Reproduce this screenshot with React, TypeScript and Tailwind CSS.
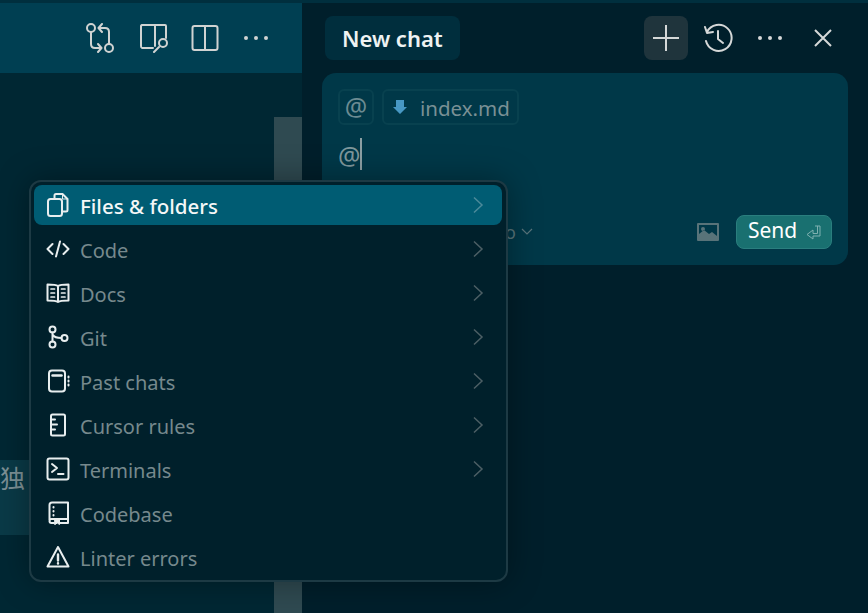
import { ReactNode } from "react";

const font = { fontFamily: '"Noto Sans", "Noto Sans CJK SC", sans-serif' };

const Svg = ({ children, className = "" }: { children: ReactNode; className?: string }) => (
  <svg viewBox="0 0 24 24" fill="none" stroke="currentColor" strokeWidth="2" strokeLinecap="round" strokeLinejoin="round" className={className}>
    {children}
  </svg>
);

const menuItems: { label: string; arrow: boolean; icon: ReactNode }[] = [
  {
    label: "Files & folders",
    arrow: true,
    icon: (
      <Svg className="w-6 h-6">
        <path d="M8.500 6V2.500a1.500 1.500 0 0 1 1.500-1.500h6.500l5 5v11a1.500 1.500 0 0 1-1.500 1.500h-4" />
        <path d="M16.500 1v5h5" strokeWidth="1" />
        <rect x="2" y="6" width="14" height="17" rx="2.500" />
      </Svg>
    ),
  },
  {
    label: "Code",
    arrow: true,
    icon: (
      <Svg className="w-6 h-6">
        <path d="M6.500 7l-5 5 5 5M17.500 7l5 5-5 5M14 4.500l-4 15" />
      </Svg>
    ),
  },
  {
    label: "Docs",
    arrow: true,
    icon: (
      <Svg className="w-6 h-6">
        <path d="M12 5C10 3.500 5 3.500 1.500 3.500v16c3.500 0 8.500 0 10.500 1.500 2-1.500 7-1.500 10.500-1.500v-16C19 3.500 14 3.500 12 5zM12 5v16" />
        <path d="M5 8h3.500M5 12h3.500M5 16h3.500M15.500 8H19M15.500 12H19M15.500 16H19" strokeWidth="1.700" />
      </Svg>
    ),
  },
  {
    label: "Git",
    arrow: true,
    icon: (
      <Svg className="w-6 h-6">
        <circle cx="6.500" cy="4.500" r="3" />
        <circle cx="6.500" cy="19.500" r="3" />
        <circle cx="18.500" cy="13" r="3" />
        <path d="M6.500 7.500v9M7 10c1 2 4 3 8.500 3" />
      </Svg>
    ),
  },
  {
    label: "Past chats",
    arrow: true,
    icon: (
      <Svg className="w-6 h-6">
        <rect x="3" y="1.500" width="16" height="21" rx="3" />
        <path d="M6.500 6.500h9" strokeWidth="2.500" />
        <path d="M22.500 7.500v1M22.500 11.500v1M22.500 15.500v1" />
      </Svg>
    ),
  },
  {
    label: "Cursor rules",
    arrow: true,
    icon: (
      <Svg className="w-6 h-6">
        <rect x="5" y="1.500" width="14" height="21" rx="1.500" />
        <path d="M5 6.500h4M5 11.500h6M5 16.500h4" />
      </Svg>
    ),
  },
  {
    label: "Terminals",
    arrow: true,
    icon: (
      <Svg className="w-6 h-6">
        <rect x="1.500" y="1.500" width="21" height="21" rx="2" />
        <path d="M6 7l5 4-5 4M12 17h5.500" />
      </Svg>
    ),
  },
  {
    label: "Codebase",
    arrow: false,
    icon: (
      <Svg className="w-6 h-6">
        <path d="M3.500 19V4a2.500 2.500 0 0 1 2.500-2.500h16V18H5.500a2 2 0 0 0-2 2 2 2 0 0 0 2 2H8M14 22h8v-4" />
        <path d="M9 19h4.500v4.500L11.250 22 9 23.500z" fill="currentColor" strokeWidth="1" />
        <path d="M7.500 6v.500M7.500 10v.500M7.500 14v.500" />
      </Svg>
    ),
  },
  {
    label: "Linter errors",
    arrow: false,
    icon: (
      <Svg className="w-6 h-6">
        <path d="M12 2L1.500 21.500h21z" />
        <path d="M12 9.500v6M12 18.200v.300" strokeWidth="2.400" />
      </Svg>
    ),
  },
];

function MenuRow({ label, arrow, icon, active }: { label: string; arrow: boolean; icon: ReactNode; active: boolean }) {
  return (
    <div className={`h-10 mb-1 rounded-lg flex items-center pl-3 pr-[18px] ${active ? "bg-[#005c73]" : ""}`}>
      <span className="w-6 h-6 text-[#e8eeef] shrink-0">{icon}</span>
      <span className={`ml-[10px] pt-[3px] flex-1 ${active ? "text-[20.500px] font-medium text-[#f4f7f7]" : "text-[20px] text-[#76898d]"}`}>{label}</span>
      {arrow && (
        <svg viewBox="0 0 12 20" fill="none" stroke="currentColor" strokeWidth="1.500" className={`w-3 h-5 ${active ? "text-[#4b8a9a]" : "text-[#4c5f65]"}`}>
          <path d="M2 2.500l8 7.500-8 7.500" />
        </svg>
      )}
    </div>
  );
}

function Dots() {
  return (
    <svg viewBox="0 0 26 6" fill="currentColor" className="w-[26px] h-[6px] block">
      <circle cx="3" cy="3" r="2" />
      <circle cx="13" cy="3" r="2" />
      <circle cx="23" cy="3" r="2" />
    </svg>
  );
}

export default function App() {
  return (
    <div className="relative w-[868px] h-[613px] overflow-hidden bg-[#001f2b] flex flex-col" style={font}>
      <div className="h-[3px] bg-[#002f3e] shrink-0" />
      <div className="flex flex-1 min-h-0">
        {/* EDITOR SIDE */}
        <div className="w-[302px] shrink-0 flex flex-col bg-[#002733]">
          <div className="h-[70px] bg-[#003f52] flex items-center pl-[85px] gap-[24px] text-[#d0d3d2]">
            <svg viewBox="0 0 30 30" fill="none" stroke="currentColor" strokeWidth="2" strokeLinecap="round" strokeLinejoin="round" className="w-[30px] h-[30px]">
              <circle cx="6" cy="5" r="4" />
              <circle cx="24" cy="25" r="4" />
              <path d="M6 9v12c0 3 2 4 4 4h6M13 21l3.500 4-3.500 4M24 21V9c0-3-2-4-4-4h-6M17 1l-3.500 4 3.500 4" />
            </svg>
            <svg viewBox="0 0 30 30" fill="none" stroke="currentColor" strokeWidth="2" strokeLinecap="round" strokeLinejoin="round" className="w-[30px] h-[30px]">
              <path d="M14 25H3a2 2 0 0 1-1-2V3a2 2 0 0 1 1-1h23a1 1 0 0 1 1 1v12M16 2v21" />
              <circle cx="24" cy="20" r="4" />
              <path d="M20 24l-5 5" />
            </svg>
            <svg viewBox="0 0 28 28" fill="none" stroke="currentColor" strokeWidth="2" className="w-7 h-7 -ml-[2px]">
              <rect x="1.500" y="2" width="25" height="24" rx="2" />
              <path d="M14 2v24" />
            </svg>
            <Dots />
          </div>
          <div className="flex-1 flex min-h-0">
            <div className="flex-1 pt-[387px]">
              <div className="h-[75px] bg-[#0a3a47] text-[#7c9095] text-[25px] leading-[36px]">独</div>
            </div>
            <div className="w-7 mt-11 bg-[#2f4a51]" />
          </div>
        </div>

        {/* CHAT SIDE */}
        <div className="flex-1 min-w-0 pl-5 pr-5">
          <div className="h-[70px] flex items-center pl-1">
            <div className="h-11 px-[17px] rounded-lg bg-[#002e3d] text-[#eef2f2] text-[22px] font-semibold flex items-center -translate-x-[1px]">New chat</div>
            <div className="ml-auto w-11 h-11 rounded-lg bg-[#1f343c] text-[#d5d8d8] flex items-center justify-center">
              <svg viewBox="0 0 28 28" fill="none" stroke="currentColor" strokeWidth="2" className="w-7 h-7 -ml-[1px]">
                <path d="M14 1v26M1 14h26" />
              </svg>
            </div>
            <div className="ml-[15px] text-[#d5d8d8]">
              <svg viewBox="0 0 30 30" fill="none" stroke="currentColor" strokeWidth="2" strokeLinecap="round" strokeLinejoin="round" className="w-[30px] h-[30px] block">
                <path d="M4 9a13 13 0 1 1-1 9M2 4l2 6 6-1M15 8v8l5 4" />
              </svg>
            </div>
            <div className="ml-[24px] text-[#d5d8d8]">
              <Dots />
            </div>
            <div className="ml-[30px] mr-[15px] text-[#d5d8d8]">
              <svg viewBox="0 0 20 20" fill="none" stroke="currentColor" strokeWidth="2" className="w-5 h-5 block">
                <path d="M2 2l16 16M18 2L2 18" />
              </svg>
            </div>
          </div>

          <div className="h-[192px] rounded-[14px] bg-[#003848] px-4 pt-4 pb-4 flex flex-col">
            <div className="flex gap-2 h-9">
              <div className="w-9 h-9 rounded-md border-2 border-[#08414f] flex items-center justify-center text-[25px] text-[#6c8b92]">@</div>
              <div className="h-9 rounded-md border-2 border-[#08414f] flex items-center pl-2 pr-[7px] text-[#7a9095] text-[20.500px]">
                <svg viewBox="0 0 16 16" className="w-4 h-[18px] mr-[12px] text-[#4798c4]" fill="currentColor">
                  <path d="M4 1h8v7h3l-7 7-7-7h3z" />
                </svg>
                <span className="pt-[3px]">index.md</span>
              </div>
            </div>
            <div className="mt-[13px] flex items-center h-8 text-[25px] text-[#7f979c]">
              <span className="pt-[3px]">@</span>
              <span className="w-[2px] h-8 bg-[#8c9fa3]" />
            </div>
            <div className="mt-auto flex items-center">
              <span className="ml-[167px] text-[#58747b] text-[18px]">o</span>
              <svg viewBox="0 0 12 8" fill="none" stroke="currentColor" strokeWidth="1.200" className="w-3 h-2 text-[#58747b] ml-[5px]">
                <path d="M1 1l5 5 5-5" />
              </svg>
              <span className="flex-1" />
              <svg viewBox="0 0 24 20" className="w-6 h-5 mr-4 text-[#587379]" fill="currentColor">
                <path fillRule="evenodd" d="M2 1h20a1 1 0 0 1 1 1v16a1 1 0 0 1-1 1H2a1 1 0 0 1-1-1V2a1 1 0 0 1 1-1zm1 2v9l5-4 5 4 3-2 5 4V3zM7 5a2 2 0 1 1 0 4 2 2 0 0 1 0-4z" />
              </svg>
              <div className="h-[34px] w-[96px] rounded-lg bg-[#197070] border border-[#2a7e7e] text-white text-[21px] flex items-center pl-[11px]">
                <span className="-mt-[2px]">Send</span>
                <svg viewBox="0 0 16 16" fill="none" stroke="currentColor" strokeWidth="1" className="w-4 h-4 ml-[9px] text-[#7fb0b0]">
                  <path d="M9 2h5v10H7v3L1 10.500 7 6v3.500h4.500V2" />
                </svg>
              </div>
            </div>
          </div>
        </div>
      </div>

      {/* AT MENU */}
      <div className="absolute left-[29px] top-[180px] w-[479px] h-[402px] rounded-xl border-2 border-[#1d3a44] bg-[#00202b] pl-[3px] pt-[3px] pr-[4px] shadow-[0_0_32px_rgba(0,0,0,0.35)]">
        {menuItems.map((m, i) => (
          <MenuRow key={m.label} label={m.label} arrow={m.arrow} icon={m.icon} active={i === 0} />
        ))}
      </div>
    </div>
  );
}
